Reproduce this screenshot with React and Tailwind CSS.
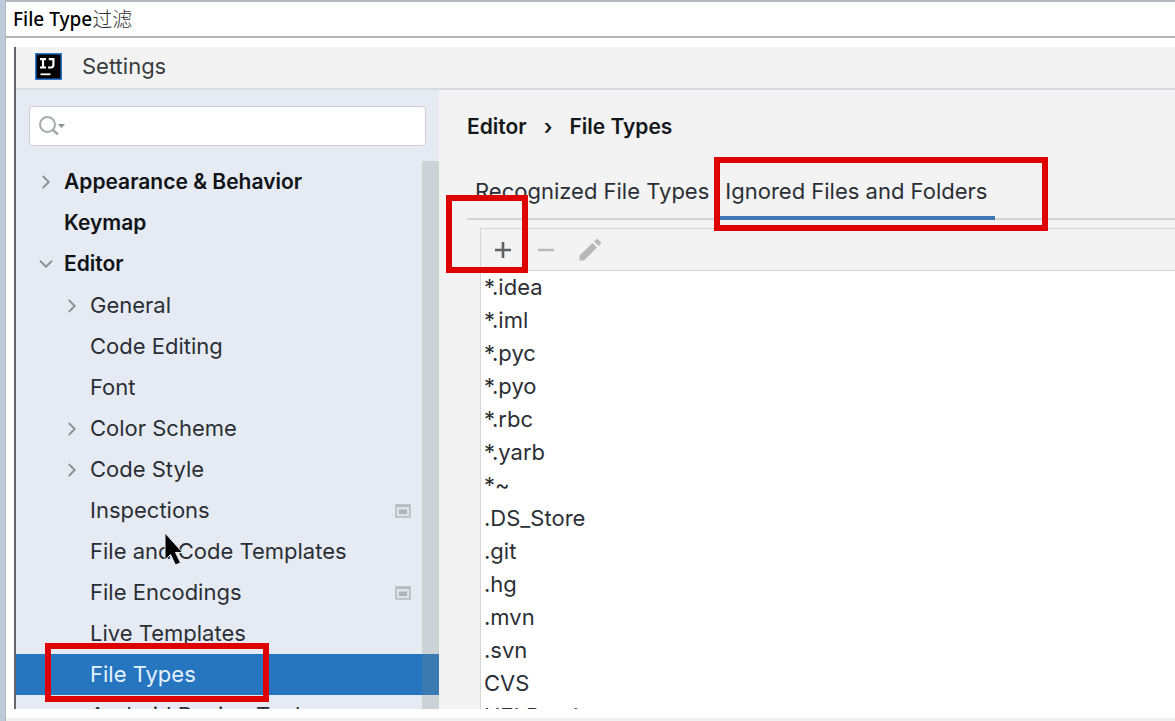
import { ChevronRight, ChevronDown } from "lucide-react";

const editorItems = [
  { name: "General", group: true },
  { name: "Code Editing" },
  { name: "Font" },
  { name: "Color Scheme", group: true },
  { name: "Code Style", group: true },
  { name: "Inspections", project: true },
  { name: "File and Code Templates" },
  { name: "File Encodings", project: true },
  { name: "Live Templates" },
  { name: "File Types", selected: true },
  { name: "Android Design Tools" },
];

const ignored = [
  "*.idea", "*.iml", "*.pyc", "*.pyo", "*.rbc", "*.yarb", "*~",
  ".DS_Store", ".git", ".hg", ".mvn", ".svn", "CVS", "HELP.md",
];

function Highlight({ className }) {
  return (
    <span
      aria-hidden="true"
      className={"pointer-events-none absolute z-10 border-6 border-[#de0000] " + className}
    />
  );
}

function IdeaLogo() {
  return (
    <svg width="27" height="27" viewBox="0 0 27 27" aria-hidden="true">
      <rect x="0.75" y="0.75" width="25.5" height="25.5" fill="#000" stroke="#2a78d0" strokeWidth="1.5" />
      <path
        d="M5 6.200h6M8 6.200v8.300M5 14.500h6M13.800 6.200h4.600v5.600c0 1.800-.8 2.700-2.400 2.700h-3"
        fill="none" stroke="#fff" strokeWidth="2.200"
      />
      <path d="M5.500 21.300h10" stroke="#fff" strokeWidth="1.800" />
    </svg>
  );
}

function SearchIcon() {
  return (
    <svg width="28" height="22" viewBox="0 0 28 22" aria-hidden="true" className="shrink-0">
      <circle cx="9.5" cy="9.5" r="7.5" fill="none" stroke="#a7abaf" strokeWidth="2" />
      <path d="M15 15l5 4.5" stroke="#a7abaf" strokeWidth="2.6" />
      <path d="M20 9h7l-3.500 4z" fill="#8c9094" />
    </svg>
  );
}

function ProjectIcon() {
  return (
    <svg width="16" height="14" viewBox="0 0 16 14" aria-hidden="true">
      <rect x="1" y="1" width="14" height="12" fill="#dfe4ea" stroke="#b5bac1" strokeWidth="1.500" />
      <path d="M1 2h14" stroke="#b5bac1" strokeWidth="2" />
      <rect x="4" y="5.500" width="8" height="4.500" fill="#aeb4bb" />
    </svg>
  );
}

function Pointer() {
  return (
    <svg
      width="20" height="36" viewBox="0 0 20 36" aria-hidden="true"
      className="pointer-events-none absolute top-px left-[148px] z-10"
    >
      <path
        d="M1 1v27l5.500-5.500 5 10.500 5-2.200-5-10.300h7z"
        fill="#000" stroke="#e8edf4" strokeWidth="1"
      />
    </svg>
  );
}

function Sidebar() {
  return (
    <nav aria-label="Settings categories" className="flex w-[423px] shrink-0 flex-col bg-[#e6ebf3]">
      <label className="mx-[13px] mt-4 mb-[15px] flex h-10 items-center gap-2 rounded border border-[#cbcfd3] bg-white px-2">
        <SearchIcon />
        <input type="search" aria-label="Search settings" className="min-w-0 flex-1 bg-transparent outline-none" />
      </label>
      <div className="relative min-h-0 flex-1">
        <ul>
          <li>
            <button className="flex h-[41px] w-full items-center pl-[19px] text-[21px] font-semibold text-[#101317]">
              <ChevronRight size={22} strokeWidth={2} className="mr-[7px] text-[#8d9196]" />
              Appearance &amp; Behavior
            </button>
          </li>
          <li>
            <button className="flex h-[41px] w-full items-center pl-12 text-[21px] font-semibold text-[#101317]">
              Keymap
            </button>
          </li>
          <li>
            <button className="mb-px flex h-[41px] w-full items-center pl-[19px] text-[21px] font-semibold text-[#101317]">
              <ChevronDown size={22} strokeWidth={2} className="mr-[7px] text-[#8d9196]" />
              Editor
            </button>
            <ul>
              {editorItems.map((item) => (
                <li key={item.name} className="relative">
                  <button
                    className={
                      "flex h-[41px] w-full items-center pr-7 " +
                      (item.selected ? "bg-[#2675bf] text-[#e4f1ff] " : "text-[#2b2f35] ") +
                      (item.group ? "pl-[45px]" : "pl-[74px]")
                    }
                  >
                    {item.group && <ChevronRight size={22} strokeWidth={2} className="mr-[7px] text-[#8d9196]" />}
                    <span className="flex-1 text-left">{item.name}</span>
                    {item.project && <ProjectIcon />}
                  </button>
                  {item.name === "File and Code Templates" && <Pointer />}
                  {item.selected && <Highlight className="-top-[11px] left-[29px] h-[59px] w-[224px]" />}
                </li>
              ))}
            </ul>
          </li>
        </ul>
        <div className="absolute inset-y-0 right-0 w-[17px] bg-[#7d8c82]/25" />
      </div>
    </nav>
  );
}

function Toolbar() {
  return (
    <div className="relative flex h-[42px] shrink-0 items-center gap-[21px] border-b border-[#d6d6d6] pl-[11px]">
      <button aria-label="Add">
        <svg width="22" height="22" viewBox="0 0 22 22" aria-hidden="true">
          <path d="M11 3v16M3 11h16" stroke="#5f6265" strokeWidth="2.600" />
        </svg>
      </button>
      <button aria-label="Remove">
        <svg width="22" height="22" viewBox="0 0 22 22" aria-hidden="true">
          <path d="M3 11h16" stroke="#b9b9b9" strokeWidth="2.500" />
        </svg>
      </button>
      <button aria-label="Edit">
        <svg width="24" height="24" viewBox="0 0 24 24" aria-hidden="true">
          <path d="M1.500 22.500v-5L14.500 5l4.500 4.500L6 22.500zM16 3.500l2-2c.7-.7 1.500-.7 2.200 0l2.300 2.300c.7.700.7 1.500 0 2.200l-2 2z" fill="#b8b8b8" />
        </svg>
      </button>
      <Highlight className="-top-[34px] -left-[35px] h-[78px] w-[82px]" />
    </div>
  );
}

function Content() {
  return (
    <main className="flex min-w-0 flex-1 flex-col bg-[#f3f3f3] pl-7">
      <h1 className="mt-[22px] flex h-[30px] items-center gap-[17px] text-[21px] font-semibold text-[#15181b]">
        <span>Editor</span>
        <span>›</span>
        <span>File Types</span>
      </h1>
      <div role="tablist" className="mt-[26px] flex h-[52px] border-b-2 border-[#d3d3d3] text-[#2b2f35]">
        <button role="tab" aria-selected="false" className="pt-px pr-2 pb-1 pl-2 whitespace-nowrap">
          Recognized File Types
        </button>
        <button
          role="tab"
          aria-selected="true"
          className="relative -mb-[2px] border-b-4 border-[#3e78b3] px-2 pb-px whitespace-nowrap"
        >
          Ignored Files and Folders
          <Highlight className="-top-[11px] -left-[3px] h-[74px] w-[334px]" />
        </button>
      </div>
      <section className="mt-2 ml-[13px] flex min-h-0 flex-1 flex-col border-t border-l border-[#d6d6d6]">
        <Toolbar />
        <ul aria-label="Ignored files and folders" className="min-h-0 flex-1 bg-white text-[#2b2f35]">
          {ignored.map((name) => (
            <li key={name} className="flex h-[33px] items-center pl-[3px]">{name}</li>
          ))}
        </ul>
      </section>
    </main>
  );
}

export default function App() {
  return (
    <div className="flex h-screen overflow-hidden bg-[#bccadb]">
      <div className="ml-[5px] flex min-w-0 flex-1 flex-col border-t-2 border-l border-[#b4b8bd] bg-white">
        <header className="flex h-9 shrink-0 items-center border-b-2 border-[#b5b5b5] pt-px pl-[7px] font-['Noto_Sans','Noto_Sans_CJK_SC',sans-serif] text-[19px] font-medium text-black">
          File Type<span className="text-xl font-light text-[#333]">过滤</span>
        </header>
        <div className="mt-[9px] ml-2 flex min-h-0 flex-1 flex-col overflow-hidden border-l-2 border-[#62666b] bg-[#f3f3f3] font-['Inter',sans-serif] text-[22px]">
          <div className="flex h-[43px] shrink-0 items-center gap-5 border-b-2 border-[#d8dbdd] pb-[3px] pl-[19px] text-[#3a3d40]">
            <IdeaLogo />
            <span>Settings</span>
          </div>
          <div className="flex min-h-0 flex-1">
            <Sidebar />
            <Content />
          </div>
        </div>
        <footer className="mt-[9px] h-[3px] shrink-0 bg-[#f0f0f0]" />
      </div>
    </div>
  );
}
